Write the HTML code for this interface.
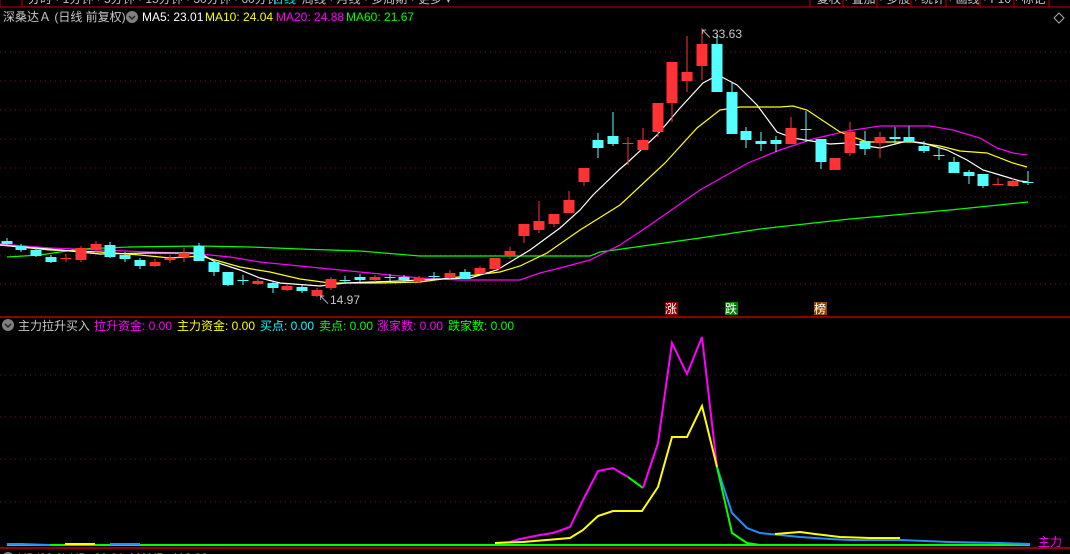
<!DOCTYPE html>
<html><head><meta charset="utf-8"><style>
html,body{margin:0;padding:0;background:#000;width:1070px;height:554px;overflow:hidden}
svg{display:block}
text{font-family:"Liberation Sans","Noto Sans CJK SC",sans-serif;font-size:12px}
</style></head><body>
<svg id="s" width="1070" height="554" viewBox="0 0 1070 554" xmlns="http://www.w3.org/2000/svg">
<rect width="1070" height="554" fill="#000"/>
<!-- top toolbar -->
<line x1="0" y1="7" x2="1070" y2="7" stroke="#c00000"/>
<rect x="0" y="-2" width="22" height="9" fill="none" stroke="#c00000"/>
<text x="28" y="3" fill="#c0c0c0">分时 · 1分钟 · 5分钟 · 15分钟 · 30分钟 · 60分钟</text>
<text x="272" y="3" fill="#00e0e0">日线</text>
<text x="302" y="3" fill="#c0c0c0">周线 · 月线 · 多周期 · 更多 ▾</text>
<g stroke="#c00000"><line x1="810" y1="0" x2="810" y2="7"/><line x1="843" y1="0" x2="843" y2="7"/><line x1="877" y1="0" x2="877" y2="7"/><line x1="911" y1="0" x2="911" y2="7"/><line x1="946" y1="0" x2="946" y2="7"/><line x1="980" y1="0" x2="980" y2="7"/><line x1="1014" y1="0" x2="1014" y2="7"/><line x1="1049" y1="0" x2="1049" y2="7"/></g>
<text x="817" y="3" fill="#c0c0c0">复权 · 叠加 · 多股 · 统计 · 画线 · F10 · 标记</text>
<!-- header -->
<text x="3" y="21" fill="#c8c8c8">深桑达Ａ (日线 前复权)</text>
<circle cx="132" cy="17" r="6" fill="#808080"/><path d="M129 16l3 3 3-3" stroke="#222" fill="none" stroke-width="1.5"/>
<text x="142" y="21" fill="#fff">MA5: 23.01</text>
<text x="205" y="21" fill="#ffff00">MA10: 24.04</text>
<text x="276" y="21" fill="#ff00ff">MA20: 24.88</text>
<text x="346" y="21" fill="#00ff00">MA60: 21.67</text>
<path d="M1054 18l5-5 5 5-5 5z" stroke="#aaa" fill="none"/>
<!-- grid -->
<g stroke="#7a1010" stroke-dasharray="1 4">
<line x1="0" y1="52" x2="1070" y2="52"/><line x1="0" y1="81" x2="1070" y2="81"/><line x1="0" y1="110" x2="1070" y2="110"/><line x1="0" y1="139" x2="1070" y2="139"/><line x1="0" y1="168" x2="1070" y2="168"/><line x1="0" y1="197" x2="1070" y2="197"/><line x1="0" y1="226" x2="1070" y2="226"/><line x1="0" y1="255" x2="1070" y2="255"/><line x1="0" y1="284" x2="1070" y2="284"/>
<line x1="0" y1="375" x2="1070" y2="375"/><line x1="0" y1="417" x2="1070" y2="417"/><line x1="0" y1="459" x2="1070" y2="459"/><line x1="0" y1="502" x2="1070" y2="502"/>
</g>
<g id="ma" fill="none" stroke-width="1.2">
<polyline stroke="#00ff00" points="7,257 40,255 80,249 130,247 200,246 250,247 300,249 360,251 420,256 590,256 600,252 650,245 700,238 760,229 850,219 950,210 1028,202"/>
<polyline stroke="#ff00ff" points="0,244 50,248 100,250 150,252 200,254 230,257 260,262 300,266 340,270 380,274 420,278 460,280 520,280 540,273 560,268 590,260 620,245 650,225 700,190 748,163 780,150 813,139 847,131 880,126 930,126 953,130 980,138 997,148 1013,153 1027,155"/>
<polyline stroke="#ffff00" points="0,245 50,250 100,252 140,255 170,258 200,256 215,260 240,267 270,272 300,279 330,283 380,283 420,282 450,278 500,272 520,266 547,253 580,230 620,205 665,163 697,128 720,110 740,107 780,107 793,106 807,110 840,132 867,142 913,142 940,146 960,151 987,153 1013,163 1027,167"/>
<polyline stroke="#ffffff" points="0,245 60,250 100,254 150,253 200,253 215,262 240,270 260,278 280,283 320,286 345,283 400,281 440,279 470,278 497,270 530,250 560,228 580,210 593,195 620,169 627,163 657,135 680,108 703,83 718,75 737,85 757,105 777,132 793,138 830,144 847,143 880,148 907,141 923,143 947,150 967,160 983,170 1000,175 1020,181 1028,182"/>
</g>
<g id="c"></g>
<text x="318" y="304" fill="#c8c8c8">↖14.97</text>
<text x="700" y="38" fill="#c8c8c8">↖33.63</text>
<rect x="665" y="302" width="13" height="13" fill="#8b0000"/><text x="665" y="313" fill="#fff">涨</text>
<rect x="725" y="302" width="13" height="13" fill="#008000"/><text x="725" y="313" fill="#fff">跌</text>
<rect x="814" y="302" width="13" height="13" fill="#8b4500"/><text x="814" y="313" fill="#fff">榜</text>
<line x1="0" y1="317" x2="1070" y2="317" stroke="#c00000" stroke-width="1.5"/>
<!-- lower header -->
<circle cx="8" cy="325" r="6" fill="#808080"/><path d="M5 324l3 3 3-3" stroke="#222" fill="none" stroke-width="1.5"/>
<text x="18" y="330" fill="#c8c8c8">主力拉升买入</text>
<text x="94" y="330" fill="#ff00ff">拉升资金: 0.00</text>
<text x="177" y="330" fill="#ffff00">主力资金: 0.00</text>
<text x="260" y="330" fill="#00ffff">买点: 0.00</text>
<text x="319" y="330" fill="#00ff00">卖点: 0.00</text>
<text x="377" y="330" fill="#ff00ff">涨家数: 0.00</text>
<text x="448" y="330" fill="#00ff00">跌家数: 0.00</text>
<g fill="none" stroke-width="2">
<polyline stroke="#00ff00" points="7,545 1030,545"/>
<polyline stroke="#1e90ff" points="7,544 22,544 50,545"/>
<polyline stroke="#ffff00" points="65,544 95,544"/>
<polyline stroke="#1e90ff" points="110,544 140,544"/>
<polyline stroke="#ff00ff" points="495,543 510,542 520,539 540,535 553,533 570,527 583,500 598,471 613,468 628,477"/>
<polyline stroke="#00ff00" points="628,477 643,488"/>
<polyline stroke="#ff00ff" points="643,488 658,443 672,343 687,374 702,337 717,467"/>
<polyline stroke="#1e90ff" points="717,467 732,513 747,528 760,533 780,535 800,537 830,539 850,540 900,540 950,542 1000,543 1030,544"/>
<polyline stroke="#ffff00" points="775,534 800,532 815,534 840,537 870,538 900,538"/>
<polyline stroke="#00ff00" points="717,467 732,533 747,543 760,545"/>
<polyline stroke="#ffff00" points="495,543 523,542 570,538 583,530 598,516 613,511 642,511 658,487 672,437 687,437 702,406 717,467"/>
</g>
<text x="1038" y="546" fill="#ff00ff" font-size="11">主力</text>
<line x1="0" y1="548" x2="1070" y2="548" stroke="#c00000" stroke-width="1.5"/>
<circle cx="8" cy="558" r="6" fill="#808080"/>
<text x="18" y="562" fill="#c8c8c8">HD(20,0) HD: 20.01</text>
<text x="130" y="562" fill="#ffff00">MAHD: 116.00</text>
</svg>
<script>
var d=[
[7,241,244,238,246,'c'],[21,246,250,244,252,'c'],[36,250,256,248,257,'c'],[51,257,262,255,263,'c'],[66,258,259,254,262,'r'],
[81,248,260,246,262,'r'],[96,244,250,241,252,'r'],[110,245,257,242,258,'c'],[125,255,259,252,262,'c'],[140,260,266,258,269,'c'],
[155,262,266,259,267,'r'],[170,258,260,255,263,'r'],[184,253,257,248,262,'r'],[199,246,261,243,261,'c'],[214,262,272,260,276,'c'],
[228,272,285,272,286,'c'],[243,280,281,275,285,'c'],[258,281,284,279,285,'r'],[273,283,288,281,293,'c'],[287,286,290,284,291,'r'],
[302,287,291,285,293,'c'],[317,290,296,288,297,'r'],[331,279,288,277,290,'r'],[345,280,281,276,284,'c'],[360,277,280,274,282,'c'],
[375,277,280,275,282,'r'],[390,277,278,274,281,'c'],[404,277,280,275,282,'c'],[419,278,281,276,283,'r'],[434,276,277,272,279,'c'],
[450,273,278,270,279,'r'],[465,272,279,269,279,'c'],[480,268,274,266,274,'r'],[495,258,269,258,269,'r'],[510,251,256,247,259,'r'],
[524,224,236,224,243,'r'],[539,221,230,201,233,'r'],[554,214,224,214,227,'r'],[569,200,213,191,213,'r'],[584,168,182,168,186,'r'],
[598,140,148,133,158,'c'],[613,136,144,112,146,'c'],[628,143,144,137,165,'r'],[643,140,150,128,150,'r'],[658,103,132,103,137,'r'],
[672,62,103,62,122,'r'],[687,72,81,36,92,'r'],[702,44,66,28,80,'r'],[717,44,92,35,92,'c'],[732,92,134,83,134,'c'],
[746,131,140,127,148,'c'],[761,141,144,132,151,'c'],[776,140,144,136,152,'c'],[791,128,144,117,144,'r'],[806,129,130,111,142,'c'],
[821,139,162,139,169,'c'],[835,158,170,158,170,'r'],[850,132,153,122,156,'r'],[865,141,149,131,155,'c'],[880,137,143,132,158,'r'],
[895,137,139,127,145,'c'],[909,137,142,126,142,'c'],[924,146,151,141,153,'c'],[939,155,156,147,160,'c'],[954,162,173,157,173,'c'],
[969,172,176,170,184,'c'],[983,174,186,174,188,'c'],[998,184,185,178,185,'r'],[1013,181,186,178,187,'r'],[1028,182,183,171,185,'c']];
var g=document.getElementById('c'),h='';
d.forEach(function(k){var col=k[5]=='r'?'#ff3333':'#54ffff';
h+='<line x1="'+k[0]+'" y1="'+k[3]+'" x2="'+k[0]+'" y2="'+k[4]+'" stroke="'+col+'"/>';
var ht=Math.max(k[2]-k[1],1);
h+='<rect x="'+(k[0]-5.5)+'" y="'+k[1]+'" width="11" height="'+ht+'" fill="'+col+'"/>';});
g.innerHTML=h;
</script>
</body></html>
